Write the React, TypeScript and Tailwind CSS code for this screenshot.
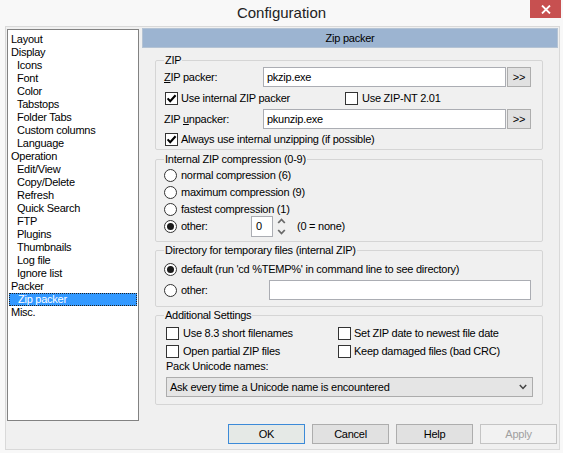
import React from "react";

const FONT = "font-['Liberation_Sans',Arial,sans-serif]";

function Check({ checked }: { checked?: boolean }) {
  return (
    <span className="w-[13px] h-[13px] shrink-0 border border-[#333333] bg-white flex items-center justify-center">
      {checked && (
        <svg width="11" height="11" viewBox="0 0 11 11">
          <path d="M1.6 5.4 L4.2 8.2 L9.6 2.2" fill="none" stroke="#000" strokeWidth="2.1" />
        </svg>
      )}
    </span>
  );
}

function Radio({ checked }: { checked?: boolean }) {
  return (
    <span className="w-[13px] h-[13px] shrink-0 rounded-full border border-[#333333] bg-white flex items-center justify-center">
      {checked && <span className="w-[7px] h-[7px] rounded-full bg-[#1a1a1a]" />}
    </span>
  );
}

function SmallBtn() {
  return (
    <div className="ml-[1px] w-[24px] h-[20px] border border-[#adadad] bg-[#e1e1e1] flex items-center justify-center text-[11px] leading-none">
      &gt;&gt;
    </div>
  );
}

const treeItems: [string, number][] = [
  ["Layout", 0],
  ["Display", 0],
  ["Icons", 1],
  ["Font", 1],
  ["Color", 1],
  ["Tabstops", 1],
  ["Folder Tabs", 1],
  ["Custom columns", 1],
  ["Language", 1],
  ["Operation", 0],
  ["Edit/View", 1],
  ["Copy/Delete", 1],
  ["Refresh", 1],
  ["Quick Search", 1],
  ["FTP", 1],
  ["Plugins", 1],
  ["Thumbnails", 1],
  ["Log file", 1],
  ["Ignore list", 1],
  ["Packer", 0],
  ["Zip packer", 2],
  ["Misc.", 0],
];

function Tree() {
  return (
    <div className="ml-[1px] mt-[2px] w-[132px] h-[392px] shrink-0 border border-[#828282] bg-white pt-[3px] flex flex-col">
      {treeItems.map(([t, lvl]) =>
        lvl === 2 ? (
          <div
            key={t}
            className="mx-[1px] h-[13px] leading-[11px] bg-[#3399ff] border border-dotted border-[#222] text-white pl-[8px]"
          >
            {t}
          </div>
        ) : (
          <div key={t} className={`h-[13px] leading-[13px] ${lvl === 1 ? "pl-[9px]" : "pl-[3px]"}`}>
            {t}
          </div>
        )
      )}
    </div>
  );
}

function Legend({ children }: { children: React.ReactNode }) {
  return <legend className="px-[1px] leading-[13px]">{children}</legend>;
}

const fsClass = "ml-[13px] w-[388px] border border-[#d5d5d5] rounded-[2px] pl-[8px] pr-0 pb-0 mx-0";

export default function App() {
  return (
    <div className={`w-[563px] h-[453px] bg-[#f8f8f8] flex flex-col overflow-hidden text-[11px] tracking-[-0.25px] text-black ${FONT}`}>
      <div className="h-[26px] shrink-0 relative flex items-center justify-center tracking-normal">
        <span className="text-[15px] text-[#222222]">Configuration</span>
        <div className="absolute right-[2px] top-0 w-[31px] h-[18px] bg-[#c75050] flex items-center justify-center">
          <svg width="10" height="9" viewBox="0 0 10 9">
            <path d="M1 0.5 L9 8.5 M9 0.5 L1 8.5" stroke="#fff" strokeWidth="1.8" />
          </svg>
        </div>
      </div>

      <div className="ml-[5px] w-[555px] h-[424px] shrink-0 border border-[#d9d9d9] bg-[#f0f0f0] flex flex-col">
        <div className="flex items-start">
          <Tree />
          <div className="ml-[3px] mt-[1px] w-[416px] flex flex-col">
            <div className="h-[20px] bg-[#9cb4d1] border border-[#b4c3d4] flex items-center justify-center leading-none">
              Zip packer
            </div>

            {/* ZIP */}
            <fieldset className={`${fsClass} mt-[6px] h-[96px]`}>
              <Legend>ZIP</Legend>
              <div className="flex items-center h-[20px]">
                <span className="w-[99px]">
                  <u>Z</u>IP packer:
                </span>
                <div className="w-[243px] h-[20px] border border-[#abadb3] bg-white pl-[3px] flex items-center">pkzip.exe</div>
                <SmallBtn />
              </div>
              <div className="flex items-center h-[13px] mt-[5px]">
                <div className="w-[180px] ml-[1px] flex items-center">
                  <Check checked />
                  <span className="ml-[3px]">Use internal ZIP packer</span>
                </div>
                <div className="flex items-center">
                  <Check />
                  <span className="ml-[4px]">Use ZIP-NT 2.01</span>
                </div>
              </div>
              <div className="flex items-center h-[20px] mt-[4px]">
                <span className="w-[99px]">
                  ZIP <u>u</u>npacker:
                </span>
                <div className="w-[243px] h-[20px] border border-[#abadb3] bg-white pl-[3px] flex items-center">pkunzip.exe</div>
                <SmallBtn />
              </div>
              <div className="flex items-center h-[13px] mt-[4px] ml-[1px]">
                <Check checked />
                <span className="ml-[3px]">Always use internal unzipping (if possible)</span>
              </div>
            </fieldset>

            {/* Compression */}
            <fieldset className={`${fsClass} mt-[3px] h-[89px] pt-[1px]`}>
              <Legend>Internal ZIP compression (0-9)</Legend>
              {["normal compression (6)", "maximum compression (9)", "fastest compression (1)"].map((t) => (
                <div key={t} className="flex items-center h-[17px]">
                  <Radio />
                  <span className="ml-[4px]">{t}</span>
                </div>
              ))}
              <div className="flex items-center h-[17px]">
                <div className="w-[87px] flex items-center">
                  <Radio checked />
                  <span className="ml-[4px]">other:</span>
                </div>
                <div className="w-[22px] h-[21px] shrink-0 border border-[#abadb3] bg-white pl-[4px] flex items-center">0</div>
                <svg className="ml-[4px] shrink-0" width="9" height="21" viewBox="0 0 9 21">
                  <path d="M1.2 7 L4.5 3.5 L7.8 7" fill="none" stroke="#6a6a6a" strokeWidth="1.8" />
                  <path d="M1.2 14 L4.5 17.5 L7.8 14" fill="none" stroke="#6a6a6a" strokeWidth="1.8" />
                </svg>
                <span className="ml-[11px]">(0 = none)</span>
              </div>
            </fieldset>

            {/* Directory */}
            <fieldset className={`${fsClass} mt-[2px] h-[63px]`}>
              <Legend>Directory for temporary files (internal ZIP)</Legend>
              <div className="flex items-center h-[20px] mt-[2px]">
                <Radio checked />
                <span className="ml-[4px]">default (run 'cd %TEMP%' in command line to see directory)</span>
              </div>
              <div className="flex items-center h-[20px] mt-[1px]">
                <div className="w-[105px] flex items-center">
                  <Radio />
                  <span className="ml-[4px]">other:</span>
                </div>
                <div className="w-[262px] h-[20px] border border-[#abadb3] bg-white" />
              </div>
            </fieldset>

            {/* Additional */}
            <fieldset className={`${fsClass} mt-[2px] h-[96px]`}>
              <Legend>Additional Settings</Legend>
              <div className="flex items-center h-[18px] mt-[2px] ml-[2px]">
                <div className="w-[172px] flex items-center">
                  <Check />
                  <span className="ml-[4px]">Use 8.3 short filenames</span>
                </div>
                <div className="flex items-center">
                  <Check />
                  <span className="ml-[3px]">Set ZIP date to newest file date</span>
                </div>
              </div>
              <div className="flex items-center h-[18px] ml-[2px]">
                <div className="w-[172px] flex items-center">
                  <Check />
                  <span className="ml-[4px]">Open partial ZIP files</span>
                </div>
                <div className="flex items-center">
                  <Check />
                  <span className="ml-[3px]">Keep damaged files (bad CRC)</span>
                </div>
              </div>
              <div className="h-[13px] leading-[13px] ml-[2px]">Pack Unicode names:</div>
              <div className="mt-[4px] ml-[2px] w-[367px] h-[20px] border border-[#acacac] bg-[#e5e5e5] pl-[3px] pr-[5px] flex items-center justify-between">
                <span>Ask every time a Unicode name is encountered</span>
                <svg width="8" height="6" viewBox="0 0 8 6">
                  <path d="M0.8 1 L4 4.5 L7.2 1" fill="none" stroke="#444" strokeWidth="1.5" />
                </svg>
              </div>
            </fieldset>
          </div>
        </div>

        <div className="flex justify-end gap-[7px] pr-[2px] mt-[3px]">
          <div className="w-[77px] h-[20px] border border-[#3c8ad8] bg-[#e5e9e6] flex items-center justify-center">OK</div>
          <div className="w-[77px] h-[20px] border border-[#adadad] bg-[#e1e1e1] flex items-center justify-center">Cancel</div>
          <div className="w-[77px] h-[20px] border border-[#adadad] bg-[#e1e1e1] flex items-center justify-center">Help</div>
          <div className="w-[77px] h-[20px] border border-[#c4c4c4] bg-[#f2f2f2] text-[#a0a0a0] flex items-center justify-center">Apply</div>
        </div>
      </div>
    </div>
  );
}
